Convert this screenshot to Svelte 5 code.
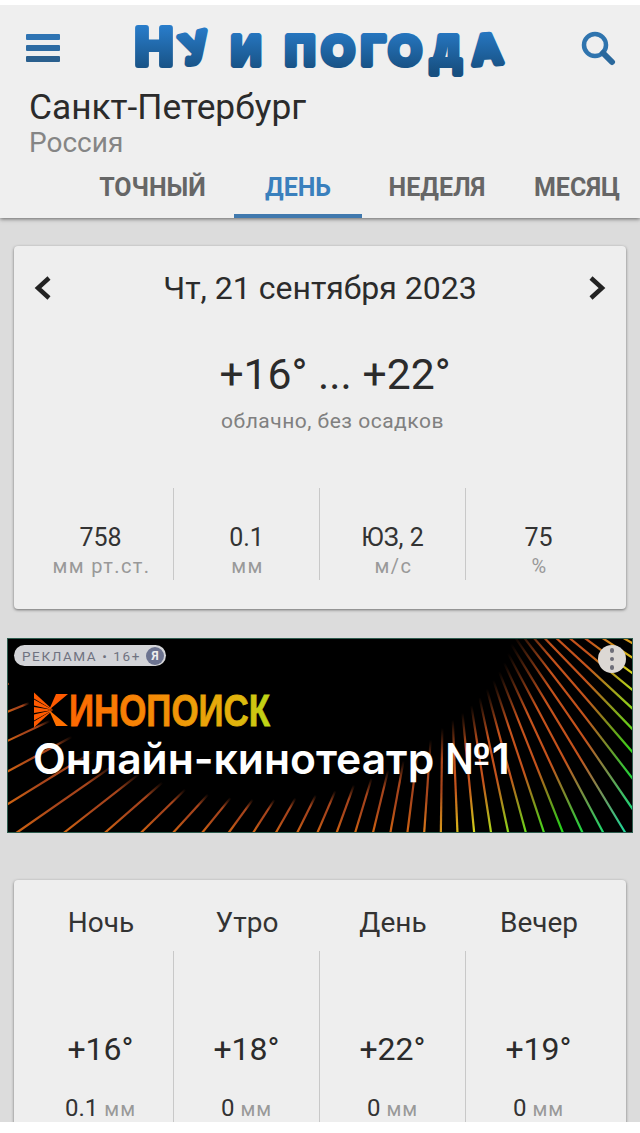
<script>
  const tabs = [
    { name: 'ТОЧНЫЙ', w: 163 },
    { name: 'ДЕНЬ', w: 128, active: true },
    { name: 'НЕДЕЛЯ', w: 150 },
    { name: 'МЕСЯЦ', w: 130 },
  ];

  const stats = [
    { value: '758', unit: 'мм рт.ст.' },
    { value: '0.1', unit: 'мм' },
    { value: 'ЮЗ, 2', unit: 'м/с' },
    { value: '75', unit: '%' },
  ];

  const parts = [
    { name: 'Ночь', temp: '+16°', rain: '0.1' },
    { name: 'Утро', temp: '+18°', rain: '0' },
    { name: 'День', temp: '+22°', rain: '0' },
    { name: 'Вечер', temp: '+19°', rain: '0' },
  ];

  // Центры букв логотипа после "Н", пробелы тоже считаются
  const logoX = '67 88 114 141 168 206 241 273 314 356';
  const logoRotate = '-14 0 0 0 0 0 0 0 0 -4';

  // Лучи баннера: фокус находится выше рекламного блока
  const W = 626;
  const H = 195;
  const fx = 438;
  const fy = -103;

  function edgeColor(x, y) {
    const d = Math.hypot(W - x, H - y);
    if (d > 215) return 'hsl(26,85%,44%)';
    const hue = 165 - (d / 215) * 139;
    return `hsl(${hue},78%,48%)`;
  }

  const rays = [];
  for (let a = -84; a <= 88; a += 3.2) {
    const rad = (a * Math.PI) / 180;
    const dx = Math.sin(rad);
    const dy = Math.cos(rad);
    const r0 = a < 0 ? 190 - a * 3.8 : Math.max(190 - a * 2, 100);
    const tBottom = (H - fy) / dy;
    const tSide = dx > 0 ? (W - fx) / dx : -fx / dx;
    const r1 = Math.min(tBottom, tSide);
    if (r1 <= r0) continue;
    const ex = fx + dx * r1;
    const ey = fy + dy * r1;
    rays.push({
      id: `ray${rays.length}`,
      x0: fx + dx * r0,
      y0: fy + dy * r0,
      x1: ex,
      y1: ey,
      base: a < 0 ? '#a8451b' : '#c4521c',
      end: edgeColor(ex, ey),
    });
  }

  const burstLeft = [3.5, 10.5, 18, 25.5, 32.5];
</script>

<div class="screen">
  <header class="top">
    <div class="brand">
      <svg class="burger" width="34" height="28" viewBox="0 0 34 28" aria-label="Меню">
        <rect x="0" y="0" width="34" height="6" rx="1" fill="#2f74b3" />
        <rect x="0" y="11" width="34" height="6" rx="1" fill="#2d6ba3" />
        <rect x="0" y="22" width="34" height="6" rx="1" fill="#2a5f8e" />
      </svg>

      <svg class="logo" width="380" height="80" viewBox="0 -12 380 80">
        <defs>
          <linearGradient id="logo-blue" gradientUnits="userSpaceOnUse" x1="0" y1="2" x2="0" y2="52">
            <stop offset="0" stop-color="#2a80d0" />
            <stop offset="1" stop-color="#174f80" />
          </linearGradient>
        </defs>
        <text class="logo-txt" y="45"><tspan class="logo-cap" x="22">Н</tspan><tspan x={logoX} rotate={logoRotate}>у и погода</tspan></text>
      </svg>

      <svg class="search" width="36" height="36" viewBox="0 0 36 36" aria-label="Поиск">
        <circle cx="15" cy="14" r="11" fill="none" stroke="#2f74ae" stroke-width="4.5" />
        <path d="M23 22 L32 31" stroke="#2a689c" stroke-width="6" stroke-linecap="round" />
      </svg>
    </div>

    <div class="place">
      <h1>Санкт-Петербург</h1>
      <p>Россия</p>
    </div>

    <nav class="tabs">
      {#each tabs as tab}
        <a class="tab" class:active={tab.active} style="width:{tab.w}px">{tab.name}</a>
      {/each}
    </nav>
  </header>

  <section class="card summary">
    <div class="date-row">
      <svg width="20" height="26" viewBox="0 0 20 26">
        <path d="M16 3 L5 13 L16 23" fill="none" stroke="#222" stroke-width="4.5" />
      </svg>
      <span>Чт, 21 сентября 2023</span>
      <svg width="20" height="26" viewBox="0 0 20 26">
        <path d="M4 3 L15 13 L4 23" fill="none" stroke="#222" stroke-width="4.5" />
      </svg>
    </div>

    <div class="temp">+16° ... +22°</div>
    <div class="cond">облачно, без осадков</div>

    <div class="stats">
      {#each stats as s}
        <div class="stat">
          <div class="val">{s.value}</div>
          <div class="unit">{s.unit}</div>
        </div>
      {/each}
    </div>
  </section>

  <aside class="ad">
    <svg class="rays" width={W} height={H} viewBox="0 0 {W} {H}">
      <defs>
        {#each rays as r}
          <linearGradient id={r.id} gradientUnits="userSpaceOnUse" x1={r.x0} y1={r.y0} x2={r.x1} y2={r.y1}>
            <stop offset="0" stop-color={r.base} stop-opacity="0" />
            <stop offset="0.3" stop-color={r.base} />
            <stop offset="0.6" stop-color={r.base} />
            <stop offset="1" stop-color={r.end} />
          </linearGradient>
        {/each}
      </defs>
      {#each rays as r}
        <line x1={r.x0} y1={r.y0} x2={r.x1} y2={r.y1} stroke="url(#{r.id})" stroke-width="2.2" />
      {/each}
    </svg>

    <div class="ad-text">
      <svg class="kp" width="320" height="56" viewBox="0 -10 320 56">
        <defs>
          <linearGradient id="kp-grad" gradientUnits="userSpaceOnUse" x1="0" y1="0" x2="240" y2="0">
            <stop offset="0" stop-color="#ff5a00" />
            <stop offset="0.5" stop-color="#f58a06" />
            <stop offset="0.85" stop-color="#e2b40c" />
            <stop offset="1" stop-color="#b6dc18" />
          </linearGradient>
        </defs>
        {#each burstLeft as y}
          <path d="M20 18 L1 {y - 3} L1 {y + 3} Z" fill="#ff5a00" />
        {/each}
        <path d="M16 18 L23 2 L35 2 Z" fill="#ff5a00" />
        <path d="M16 18 L23 34 L35 34 Z" fill="#ff7000" />
        <text class="kp-txt" x="36" y="34" textLength="201" lengthAdjust="spacingAndGlyphs">ИНОПОИСК</text>
      </svg>
      <div class="slogan">Онлайн-кинотеатр №1</div>
    </div>

    <div class="ad-label">
      <span>РЕКЛАМА • 16+</span>
      <b>Я</b>
    </div>
    <div class="ad-menu"><i></i><i></i><i></i></div>
  </aside>

  <section class="card dayparts">
    <div class="part-names">
      {#each parts as p}
        <div>{p.name}</div>
      {/each}
    </div>
    <div class="part-cols">
      {#each parts as p}
        <div class="part">
          <div class="part-temp">{p.temp}</div>
          <div class="part-rain">{p.rain} <small>мм</small></div>
        </div>
      {/each}
    </div>
  </section>
</div>

<style>
  :global(body) {
    background: #fff;
    font-family: Roboto, "Noto Sans", sans-serif;
  }

  .screen {
    margin-top: 5px;
    height: 1117px;
    overflow: hidden;
    background: #dcdcdc;
  }

  .top {
    height: 213px;
    background: #efefef;
    box-shadow: 0 1px 4px rgba(0, 0, 0, 0.55);
    position: relative;
  }

  .brand {
    display: flex;
    align-items: flex-start;
    height: 83px;
    padding-left: 26px;
  }

  .burger {
    margin-top: 29px;
  }

  .logo {
    margin: 3px 0 0 72px;
  }

  .logo-txt {
    font-family: "Liberation Sans", sans-serif;
    font-weight: 700;
    font-size: 42px;
    text-transform: uppercase;
    text-anchor: middle;
    fill: url(#logo-blue);
    stroke: url(#logo-blue);
    stroke-width: 6;
    stroke-linejoin: round;
  }

  .logo-cap {
    font-size: 54px;
  }

  .search {
    margin: 26px 0 0 68px;
  }

  .place {
    padding-left: 29px;
  }

  .place h1 {
    margin: 0;
    font-size: 35.3px;
    font-weight: 400;
    line-height: 38px;
    color: #2b2b2b;
  }

  .place p {
    margin: 0;
    font-size: 28px;
    line-height: 34px;
    color: #858585;
  }

  .tabs {
    display: flex;
    padding-left: 71px;
    margin-top: 2px;
  }

  .tab {
    flex: none;
    height: 56px;
    box-sizing: border-box;
    padding-top: 11px;
    text-align: center;
    font-size: 25px;
    font-weight: 700;
    line-height: 30px;
    color: #666;
  }

  .tab.active {
    color: #3a80bd;
    border-bottom: 4px solid #4079ae;
  }

  .card {
    margin: 0 14px;
    background: #eee;
    border-radius: 4px;
    box-shadow: 0 1px 3px rgba(0, 0, 0, 0.5);
  }

  .summary {
    margin-top: 28px;
    height: 363px;
    box-sizing: border-box;
    padding: 24px 13px 0;
  }

  .date-row {
    display: flex;
    align-items: center;
    justify-content: space-between;
    padding: 0 6px;
    height: 36px;
    font-size: 32px;
    color: #2b2b2b;
  }

  .temp {
    margin-top: 44px;
    padding-left: 30px;
    text-align: center;
    font-size: 42.7px;
    line-height: 48px;
    color: #2b2b2b;
  }

  .cond {
    margin-top: 10px;
    padding-left: 25px;
    text-align: center;
    font-size: 21px;
    line-height: 26px;
    letter-spacing: 0.5px;
    color: #808080;
  }

  .stats {
    display: grid;
    grid-template-columns: repeat(4, 146px);
    margin-top: 54px;
  }

  .stat {
    height: 92px;
    box-sizing: border-box;
    padding-top: 35px;
    text-align: center;
    border-left: 1px solid #c8c8c8;
  }

  .stat:first-child {
    border-left-color: transparent;
  }

  .val {
    font-size: 25px;
    line-height: 29px;
    color: #333;
  }

  .unit {
    padding-left: 2px;
    font-size: 20px;
    line-height: 28px;
    letter-spacing: 1.4px;
    color: #999;
  }

  .ad {
    position: relative;
    margin: 29px 7px 0;
    width: 626px;
    height: 195px;
    box-sizing: border-box;
    background: #000;
    overflow: hidden;
  }

  .ad::after {
    content: "";
    position: absolute;
    inset: 0;
    border: 1px solid #2d5c4e;
  }

  .rays {
    position: absolute;
    inset: 0;
  }

  .ad-text {
    position: relative;
    padding: 54px 0 0 26px;
  }

  .kp {
    display: block;
    margin: -10px 0;
  }

  .kp-txt {
    font-family: "Liberation Sans Narrow", "Liberation Sans", sans-serif;
    font-weight: 700;
    font-size: 45px;
    fill: url(#kp-grad);
    stroke: url(#kp-grad);
    stroke-width: 0.8;
  }

  .slogan {
    margin-top: 9px;
    font-family: Inter, sans-serif;
    font-weight: 600;
    font-size: 42.6px;
    line-height: 44px;
    color: #fff;
    white-space: nowrap;
  }

  .ad-label {
    position: absolute;
    left: 7px;
    top: 7px;
    width: 152px;
    height: 21px;
    box-sizing: border-box;
    display: flex;
    align-items: center;
    justify-content: space-between;
    padding: 0 2px 0 8px;
    border-radius: 11px;
    background: #d3d4d8;
    font-size: 13.5px;
    letter-spacing: 1.6px;
    color: #6f7280;
    white-space: nowrap;
  }

  .ad-label b {
    display: block;
    width: 18px;
    height: 18px;
    border-radius: 50%;
    background: #6c7390;
    color: #eee;
    font-size: 12px;
    letter-spacing: 0;
    line-height: 18px;
    text-align: center;
  }

  .ad-menu {
    position: absolute;
    right: 7px;
    top: 7px;
    width: 28px;
    height: 28px;
    border-radius: 50%;
    background: #dcd8d4;
    display: flex;
    flex-direction: column;
    align-items: center;
    justify-content: center;
    gap: 4px;
  }

  .ad-menu i {
    width: 4.5px;
    height: 4.5px;
    border-radius: 50%;
    background: #6e6e78;
  }

  .dayparts {
    margin-top: 47px;
    height: 260px;
    box-sizing: border-box;
    padding: 26px 13px 0;
  }

  .part-names {
    display: grid;
    grid-template-columns: repeat(4, 146px);
    height: 45px;
    padding-left: 1px;
    text-align: center;
    font-size: 28px;
    line-height: 34px;
    color: #333;
  }

  .part-cols {
    display: grid;
    grid-template-columns: repeat(4, 146px);
  }

  .part {
    height: 175px;
    box-sizing: border-box;
    padding-top: 78px;
    text-align: center;
    border-left: 1px solid #c8c8c8;
  }

  .part:first-child {
    border-left-color: transparent;
  }

  .part-temp {
    font-size: 32px;
    line-height: 40px;
    color: #2b2b2b;
  }

  .part-rain {
    margin-top: 24px;
    font-size: 24px;
    line-height: 30px;
    color: #333;
  }

  .part-rain small {
    font-size: 20px;
    letter-spacing: 1px;
    color: #999;
  }
</style>
